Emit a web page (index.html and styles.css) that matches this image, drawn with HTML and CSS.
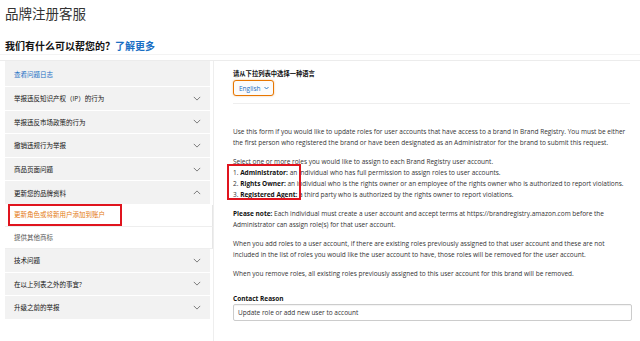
FILE: index.html
```html
<!DOCTYPE html>
<html lang="zh-CN">
<head>
  <meta charset="UTF-8" />
  <title>品牌注册客服</title>
  <link rel="stylesheet" href="styles.css">
</head>
<body>
  <header class="top">
    <h1 class="title">品牌注册客服</h1>
    <h2 class="subtitle">我们有什么可以帮您的？<a class="more" href="#">了解更多</a></h2>
  </header>

  <main class="main">
    <nav class="sidebar">
      <div class="row first"><a class="log" href="#">查看问题日志</a></div>
      <div class="row"><span>举报违反知识产权（IP）的行为</span><svg class="chev" viewBox="0 0 10 6"><polyline points="1,1 5,5 9,1"/></svg></div>
      <div class="row"><span>举报违反市场政策的行为</span><svg class="chev" viewBox="0 0 10 6"><polyline points="1,1 5,5 9,1"/></svg></div>
      <div class="row"><span>撤销违规行为举报</span><svg class="chev" viewBox="0 0 10 6"><polyline points="1,1 5,5 9,1"/></svg></div>
      <div class="row"><span>商品页面问题</span><svg class="chev" viewBox="0 0 10 6"><polyline points="1,1 5,5 9,1"/></svg></div>
      <div class="row open"><span>更新您的品牌资料</span><svg class="chev" viewBox="0 0 10 6"><polyline points="1,5 5,1 9,5"/></svg></div>
      <div class="sub active"><span class="mark">更新角色或将新用户添加到账户</span></div>
      <div class="sub"><span>提供其他商标</span></div>
      <div class="row"><span>技术问题</span><svg class="chev" viewBox="0 0 10 6"><polyline points="1,1 5,5 9,1"/></svg></div>
      <div class="row"><span>在以上列表之外的事宜?</span><svg class="chev" viewBox="0 0 10 6"><polyline points="1,1 5,5 9,1"/></svg></div>
      <div class="row"><span>升级之前的举报</span><svg class="chev" viewBox="0 0 10 6"><polyline points="1,1 5,5 9,1"/></svg></div>
    </nav>

    <section class="content">
      <div class="lang">
        <div class="lang-label">请从下拉列表中选择一种语言</div>
        <button class="lang-btn">English <svg class="lang-chev" viewBox="0 0 10 6"><polyline points="1,1 5,5 9,1"/></svg></button>
      </div>

      <div class="text">
        <p>Use this form if you would like to update roles for user accounts that have access to a brand in Brand Registry. You must be either the first person who registered the brand or have been designated as an Administrator for the brand to submit this request.</p>
        <div class="roles">
          <div>Select one or more roles you would like to assign to each Brand Registry user account.</div>
          <div>1. <b>Administrator:</b> an individual who has full permission to assign roles to user accounts.</div>
          <div>2. <b>Rights Owner:</b> an individual who is the rights owner or an employee of the rights owner who is authorized to report violations.</div>
          <div>3. <b>Registered Agent:</b> a third party who is authorized by the rights owner to report violations.</div>
          <div class="mark-box"></div>
        </div>
        <p><b>Please note:</b> Each individual must create a user account and accept terms at https://brandregistry.amazon.com before the Administrator can assign role(s) for that user account.</p>
        <p>When you add roles to a user account, if there are existing roles previously assigned to that user account and these are not included in the list of roles you would like the user account to have, those roles will be removed for the user account.</p>
        <p>When you remove roles, all existing roles previously assigned to this user account for this brand will be removed.</p>
      </div>

      <div class="field">
        <div class="field-label">Contact Reason</div>
        <div class="field-input">Update role or add new user to account</div>
      </div>
    </section>
  </main>
</body>
</html>
```

FILE: styles.css
```css
html, body {
  margin: 0;
  padding: 0;
  background: white;
  color: #333;
  font-family: 'Open Sans', 'Noto Sans CJK SC', sans-serif;
}

.top {
  padding: 5px 5px 0 5px;
  height: 55px;
  border-bottom: 1px solid #f3f3f3;
  box-sizing: border-box;
}

.title {
  margin: 0;
  font-size: 13.5px;
  line-height: 18px;
  font-weight: normal;
  color: #333;
}

.subtitle {
  margin: 16px 0 0 0;
  font-size: 10px;
  line-height: 14px;
  font-weight: bold;
  color: #111;
}

.more {
  color: #1a6fc4;
  text-decoration: none;
}

.main {
  display: flex;
  margin-top: 5px;
  border-top: 1px solid #ececec;
}

.sidebar {
  width: 208px;
  margin-left: 5px;
  padding-bottom: 24px;
  border-right: 1px solid #eee;
  flex-shrink: 0;
}

.row {
  display: flex;
  align-items: center;
  justify-content: space-between;
  height: 22.6px;
  margin-right: 3px;
  padding: 0 9px 0 9px;
  background: #f2f2f2;
  border-bottom: 1px solid #fff;
  font-size: 6.5px;
  color: #111;
}

.row.first {
  height: 25px;
}

.log {
  color: #1a6fc4;
  text-decoration: none;
}

.chev {
  width: 8px;
  height: 5px;
  fill: none;
  stroke: #777;
  stroke-width: 1.2;
}

.sub {
  display: flex;
  align-items: center;
  height: 21px;
  padding: 0 9px;
  background: white;
  border-bottom: 1px solid #eee;
  border-right: 1px solid #e6e6e6;
  font-size: 6.5px;
  color: #555;
}

.sub.active {
  padding-left: 3px;
  color: #e47911;
}

.mark {
  display: inline-block;
  padding: 5px 15px 5px 4px;
  border: 2px solid #e0141e;
  line-height: 8px;
}

.content {
  flex: 1;
  padding: 7px 8px 0 19px;
  font-size: 6.5px;
  color: #333;
}

.lang {
  padding-bottom: 7px;
  border-bottom: 1px solid #eee;
  margin-right: 2px;
}

.lang-label {
  font-weight: bold;
  font-size: 6.3px;
  color: #111;
  line-height: 11px;
}

.lang-btn {
  display: flex;
  align-items: center;
  gap: 3px;
  margin-top: 1px;
  height: 16px;
  padding: 0 4px 0 5px;
  background: #fbfbfb;
  border: 1px solid #e77600;
  border-radius: 3px;
  box-shadow: 0 0 2px rgba(228, 121, 17, 0.5);
  font-family: inherit;
  font-size: 6.5px;
  color: #1a6fc4;
}

.lang-chev {
  width: 5px;
  height: 4px;
  fill: none;
  stroke: #1a6fc4;
  stroke-width: 1.8;
}

.text {
  padding-top: 22px;
  line-height: 11px;
}

.text p {
  margin: 0 0 8px 0;
}

.roles {
  position: relative;
  margin-bottom: 8px;
}

.text b {
  color: #111;
}

.mark-box {
  position: absolute;
  left: -6px;
  top: 8px;
  width: 70px;
  height: 32px;
  border: 2px solid #e0141e;
}

.field {
  padding-top: 6px;
}

.field-label {
  font-weight: bold;
  color: #111;
  line-height: 11px;
}

.field-input {
  margin-top: 0;
  height: 15px;
  line-height: 15px;
  padding: 0 4px;
  border: 1px solid #ccc;
  border-radius: 2px;
  box-shadow: inset 0 1px 1px rgba(0,0,0,0.05);
  color: #333;
}
```
